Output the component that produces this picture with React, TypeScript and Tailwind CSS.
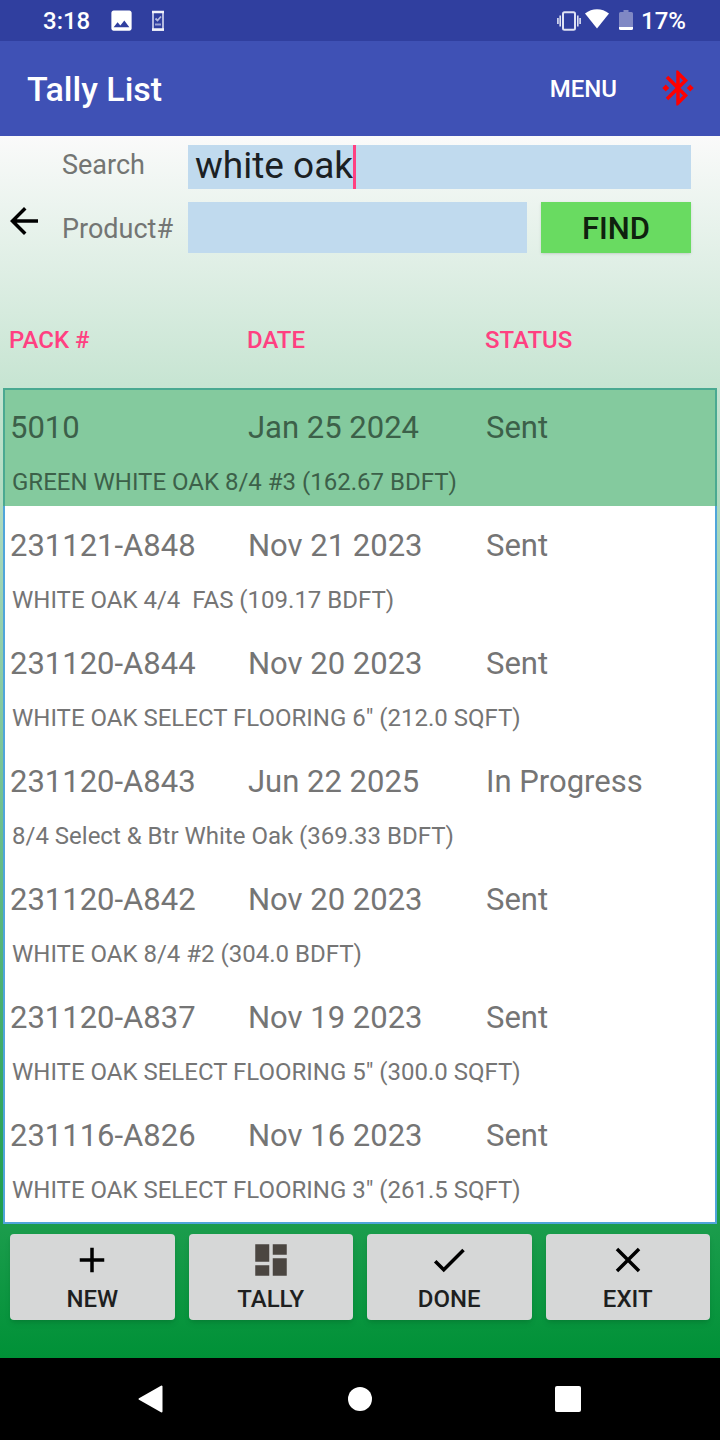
import { useState } from 'react';
import {
  MdAdd,
  MdArrowBack,
  MdBluetoothConnected,
  MdCheck,
  MdClose,
  MdDashboard,
  MdImage,
} from 'react-icons/md';

const packs = [
  { id: '5010', date: 'Jan 25 2024', status: 'Sent', detail: 'GREEN WHITE OAK 8/4 #3 (162.67 BDFT)' },
  { id: '231121-A848', date: 'Nov 21 2023', status: 'Sent', detail: 'WHITE OAK 4/4  FAS (109.17 BDFT)' },
  { id: '231120-A844', date: 'Nov 20 2023', status: 'Sent', detail: 'WHITE OAK SELECT FLOORING 6" (212.0 SQFT)' },
  { id: '231120-A843', date: 'Jun 22 2025', status: 'In Progress', detail: '8/4 Select & Btr White Oak (369.33 BDFT)' },
  { id: '231120-A842', date: 'Nov 20 2023', status: 'Sent', detail: 'WHITE OAK 8/4 #2 (304.0 BDFT)' },
  { id: '231120-A837', date: 'Nov 19 2023', status: 'Sent', detail: 'WHITE OAK SELECT FLOORING 5" (300.0 SQFT)' },
  { id: '231116-A826', date: 'Nov 16 2023', status: 'Sent', detail: 'WHITE OAK SELECT FLOORING 3" (261.5 SQFT)' },
];

const actions = [
  { label: 'NEW', icon: <MdAdd size={42} className="text-black" /> },
  { label: 'TALLY', icon: <MdDashboard size={42} className="text-[#4b4641]" /> },
  { label: 'DONE', icon: <MdCheck size={42} className="text-black" /> },
  { label: 'EXIT', icon: <MdClose size={42} className="text-black" /> },
];

function StatusBar() {
  return (
    <div className="flex h-[41px] items-center bg-[#303f9f] pt-px pr-[34px] pl-[43px] text-2xl font-medium text-white">
      <span>3:18</span>
      <MdImage size={27} className="mb-0.5 ml-[18px]" />
      <svg width="14" height="22" viewBox="0 0 14 22" className="mb-px ml-4">
        <rect x="2" y="2" width="10" height="18" fill="#303f9f" stroke="#b4bae0" strokeWidth="2" />
        <path d="M1 2h12M1 19.500h12" stroke="#f2f3fa" strokeWidth="2.600" />
        <path d="M4.500 8.500l2 2 3.500-4" fill="none" stroke="#b4bae0" strokeWidth="1.800" />
        <path d="M4 14.500h6" stroke="#9ba3d4" strokeWidth="2" />
      </svg>
      <div className="ml-auto flex items-center">
        <svg width="24" height="20" viewBox="0 0 24 20" className="mr-1" fill="none" stroke="#dfe2f3" strokeWidth="2">
          <rect x="6" y="1.200" width="12" height="17.600" rx="1.500" />
          <path d="M3.200 4.500v11M20.800 4.500v11M.9 7v6M23.100 7v6" strokeWidth="1.600" />
        </svg>
        <svg width="24" height="20" viewBox="0 0 24 20" className="mr-2.5 mb-1">
          <path d="M0 4.500C7-1.300 17-1.300 24 4.500L12 19.500z" fill="#fff" />
        </svg>
        <svg width="14" height="20" viewBox="0 0 14 20" className="mr-2 mb-0.5">
          <path d="M1.500 2H4.500V0h5v2h3Q14 2 14 3.500V17H0V3.500Q0 2 1.500 2z" fill="#8088c4" />
          <path d="M0 17h14v1.500q0 1.500-1.500 1.500h-11Q0 20 0 18.500z" fill="#fff" />
        </svg>
        <span>17%</span>
      </div>
    </div>
  );
}

function SearchForm() {
  const [search, setSearch] = useState('white oak');
  const [product, setProduct] = useState('');

  return (
    <form
      onSubmit={(e) => e.preventDefault()}
      className="flex pt-[9px] pr-[29px] text-[27px] text-[#737573]"
    >
      <button type="button" aria-label="Back" className="mt-[55px] h-[42px] w-[62px] shrink-0 pl-[3px] text-black">
        <MdArrowBack size={42} />
      </button>
      <div className="min-w-0 flex-1 space-y-[13px]">
        <div className="flex h-11">
          <label htmlFor="search" className="w-[126px] shrink-0 leading-10">
            Search
          </label>
          <div className="flex min-w-0 flex-1 bg-[#c0daee] pl-[7px]">
            <input
              id="search"
              value={search}
              onChange={(e) => setSearch(e.target.value)}
              className="field-sizing-content max-w-full pb-0.5 text-[37px] leading-10 text-[#1b2023] caret-transparent outline-none"
            />
            <span className="w-[3px] shrink-0 bg-[#ff4081]" />
          </div>
        </div>
        <div className="flex h-[51px]">
          <label htmlFor="product" className="w-[126px] shrink-0 leading-[54px]">
            Product#
          </label>
          <input
            id="product"
            value={product}
            onChange={(e) => setProduct(e.target.value)}
            className="min-w-0 flex-1 bg-[#c0daee] px-2 text-[37px] text-[#1b2023] outline-none"
          />
          <button
            type="submit"
            className="ml-3.5 w-[150px] shrink-0 bg-[#69db61] pt-[3px] text-[31px] font-medium text-[#0f210e] shadow-sm"
          >
            FIND
          </button>
        </div>
      </div>
    </form>
  );
}

function PackTable() {
  const [selected, setSelected] = useState('5010');

  return (
    <div className="mt-[63px] flex-1 px-[3px]">
      <table className="w-full table-fixed border-separate border-spacing-0 text-left">
        <thead>
          <tr className="h-[72px] align-top text-2xl leading-12 font-medium text-[#ff4081]">
            <th className="pl-1.5 font-medium">PACK #</th>
            <th className="pl-1.5 font-medium">DATE</th>
            <th className="pl-1.5 font-medium">STATUS</th>
          </tr>
        </thead>
        {packs.map((pack, index) => {
          const active = pack.id === selected;
          const first = index === 0;
          const last = index === packs.length - 1;
          const edge = active ? 'border-[#4aa991]' : 'border-[#50a5da]';
          const top = first ? 'border-t-2 pt-3.5' : 'pt-4';

          return (
            <tbody
              key={pack.id}
              onClick={() => setSelected(pack.id)}
              className={active ? 'bg-[#84ca9e] text-[#3c6049]' : 'bg-white text-[#757575]'}
            >
              <tr className="text-[31px] leading-12">
                <td className={`border-l-2 pl-[5px] ${edge} ${top}`}>{pack.id}</td>
                <td className={`pl-[7px] ${edge} ${top}`}>{pack.date}</td>
                <td className={`border-r-2 pl-[7px] ${edge} ${top}`}>{pack.status}</td>
              </tr>
              <tr className="text-2xl leading-10">
                <td
                  colSpan={3}
                  className={`border-x-2 pt-2.5 pl-[7px] whitespace-pre ${edge} ${last ? 'border-b-2 pb-3' : 'pb-1'}`}
                >
                  {pack.detail}
                </td>
              </tr>
            </tbody>
          );
        })}
      </table>
    </div>
  );
}

function NavBar() {
  return (
    <nav className="flex h-[82px] justify-center bg-black">
      <button aria-label="Back" className="flex w-[208px] items-center justify-center">
        <svg width="28" height="28" viewBox="0 0 28 28">
          <path d="M1.500 14L23.500 1.500V26.500z" fill="#fff" stroke="#fff" strokeWidth="2" strokeLinejoin="round" />
        </svg>
      </button>
      <button aria-label="Home" className="flex w-[208px] items-center justify-center">
        <span className="size-6 rounded-full bg-white" />
      </button>
      <button aria-label="Recent apps" className="flex w-[208px] items-center justify-center">
        <span className="size-[26px] rounded-xs bg-white" />
      </button>
    </nav>
  );
}

export default function App() {
  return (
    <div className="flex min-h-screen flex-col font-[Roboto,sans-serif]">
      <StatusBar />
      <header className="flex h-[95px] items-center bg-[#3f51b5] pr-[21px] pl-[27px] font-medium text-white">
        <h1 className="pt-0.5 text-[34px]">Tally List</h1>
        <button className="ml-auto text-2xl">MENU</button>
        <button aria-label="Bluetooth" className="ml-10 pb-0.5 text-[#ff0000]">
          <MdBluetoothConnected size={42} />
        </button>
      </header>
      <main className="flex flex-1 flex-col bg-linear-to-b/srgb from-[#fafafa] to-[#009137]">
        <SearchForm />
        <PackTable />
        <div className="grid grid-cols-4 gap-3.5 px-2.5 pt-2.5 pb-[38px]">
          {actions.map((action) => (
            <button
              key={action.label}
              className="flex h-[86px] flex-col items-center rounded-sm bg-[#d6d7d7] pt-[5px] text-2xl leading-9 font-medium text-[#1e1f1f] shadow-md"
            >
              {action.icon}
              {action.label}
            </button>
          ))}
        </div>
      </main>
      <NavBar />
    </div>
  );
}
